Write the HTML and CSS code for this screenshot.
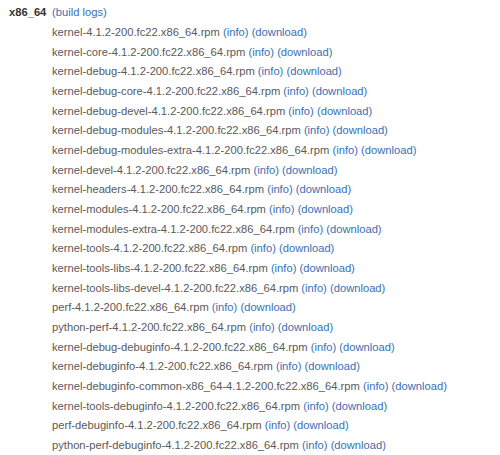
FILE: index.html
```html
<!DOCTYPE html>
<html>
<head>
<meta charset="utf-8">
<link rel="stylesheet" href="styles.css">
</head>
<body>
<div class="arch">
  <div class="arch-name">x86_64</div>
  <div class="arch-body">
    <div class="logs"><a href="#">(build logs)</a></div>
    <ul class="rpms">
      <li>kernel-4.1.2-200.fc22.x86_64.rpm <a href="#">(info)</a> <a href="#">(download)</a></li>
      <li>kernel-core-4.1.2-200.fc22.x86_64.rpm <a href="#">(info)</a> <a href="#">(download)</a></li>
      <li>kernel-debug-4.1.2-200.fc22.x86_64.rpm <a href="#">(info)</a> <a href="#">(download)</a></li>
      <li>kernel-debug-core-4.1.2-200.fc22.x86_64.rpm <a href="#">(info)</a> <a href="#">(download)</a></li>
      <li>kernel-debug-devel-4.1.2-200.fc22.x86_64.rpm <a href="#">(info)</a> <a href="#">(download)</a></li>
      <li>kernel-debug-modules-4.1.2-200.fc22.x86_64.rpm <a href="#">(info)</a> <a href="#">(download)</a></li>
      <li>kernel-debug-modules-extra-4.1.2-200.fc22.x86_64.rpm <a href="#">(info)</a> <a href="#">(download)</a></li>
      <li>kernel-devel-4.1.2-200.fc22.x86_64.rpm <a href="#">(info)</a> <a href="#">(download)</a></li>
      <li>kernel-headers-4.1.2-200.fc22.x86_64.rpm <a href="#">(info)</a> <a href="#">(download)</a></li>
      <li>kernel-modules-4.1.2-200.fc22.x86_64.rpm <a href="#">(info)</a> <a href="#">(download)</a></li>
      <li>kernel-modules-extra-4.1.2-200.fc22.x86_64.rpm <a href="#">(info)</a> <a href="#">(download)</a></li>
      <li>kernel-tools-4.1.2-200.fc22.x86_64.rpm <a href="#">(info)</a> <a href="#">(download)</a></li>
      <li>kernel-tools-libs-4.1.2-200.fc22.x86_64.rpm <a href="#">(info)</a> <a href="#">(download)</a></li>
      <li>kernel-tools-libs-devel-4.1.2-200.fc22.x86_64.rpm <a href="#">(info)</a> <a href="#">(download)</a></li>
      <li>perf-4.1.2-200.fc22.x86_64.rpm <a href="#">(info)</a> <a href="#">(download)</a></li>
      <li>python-perf-4.1.2-200.fc22.x86_64.rpm <a href="#">(info)</a> <a href="#">(download)</a></li>
      <li>kernel-debug-debuginfo-4.1.2-200.fc22.x86_64.rpm <a href="#">(info)</a> <a href="#">(download)</a></li>
      <li>kernel-debuginfo-4.1.2-200.fc22.x86_64.rpm <a href="#">(info)</a> <a href="#">(download)</a></li>
      <li>kernel-debuginfo-common-x86_64-4.1.2-200.fc22.x86_64.rpm <a href="#">(info)</a> <a href="#">(download)</a></li>
      <li>kernel-tools-debuginfo-4.1.2-200.fc22.x86_64.rpm <a href="#">(info)</a> <a href="#">(download)</a></li>
      <li>perf-debuginfo-4.1.2-200.fc22.x86_64.rpm <a href="#">(info)</a> <a href="#">(download)</a></li>
      <li>python-perf-debuginfo-4.1.2-200.fc22.x86_64.rpm <a href="#">(info)</a> <a href="#">(download)</a></li>
    </ul>
  </div>
</div>
</body>
</html>
```
FILE: styles.css
```css
body {
  margin: 0;
  background: #fff;
  font-family: "Liberation Sans", Arial, sans-serif;
  font-size: 11.2px;
  color: #5a5a5a;
}
.arch {
  display: flex;
  gap: 8px;
  padding: 5px 0 0 9px;
}
.arch-name {
  font-weight: bold;
  color: #333;
  line-height: 15px;
  width: 35px;
}
.arch-body {
  display: flex;
  flex-direction: column;
}
.logs {
  line-height: 15px;
}
.rpms {
  list-style: none;
  margin: 0;
  padding: 3px 0 0 0;
}
.rpms li {
  line-height: 19.67px;
  white-space: nowrap;
}
a {
  color: #3a6fb3;
  text-decoration: none;
}
```
